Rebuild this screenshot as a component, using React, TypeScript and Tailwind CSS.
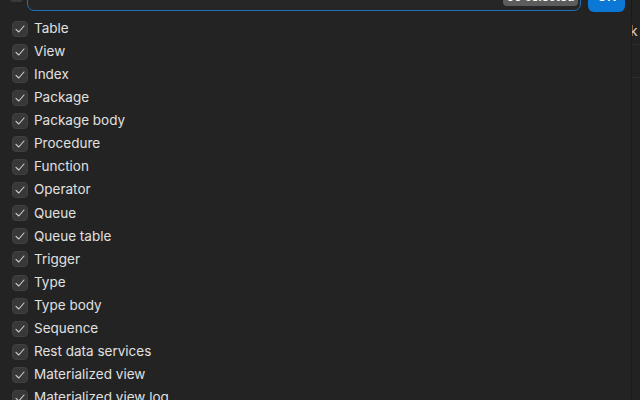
import React from "react";

// Tipos de objeto listados en el filtro
const items = [
  "Table",
  "View",
  "Index",
  "Package",
  "Package body",
  "Procedure",
  "Function",
  "Operator",
  "Queue",
  "Queue table",
  "Trigger",
  "Type",
  "Type body",
  "Sequence",
  "Rest data services",
  "Materialized view",
  "Materialized view log",
];

const Check: React.FC = () => (
  <span className="w-[16px] h-[16px] rounded-[4px] bg-[#383838] border border-[#404040] flex items-center justify-center shrink-0">
    <svg width="12" height="12" viewBox="0 0 12 12" fill="none">
      <path d="M2 6.3 L4.8 9 L10 3" stroke="#cfcfcf" strokeWidth="1.1" strokeLinecap="round" strokeLinejoin="round" />
    </svg>
  </span>
);

const App: React.FC = () => {
  return (
    <div
      className="w-[640px] h-[400px] overflow-hidden bg-[#232323] flex text-[#e3e3e3]"
      style={{ fontFamily: "Inter, 'Noto Sans', sans-serif" }}
    >
      {/* Panel principal */}
      <div className="w-[631px] shrink-0 flex flex-col">
        {/* Barra superior (cortada) */}
        <div className="flex items-end h-[28px] -mt-[18px] pl-[10px] shrink-0">
          <div className="w-[13px] h-[20px] rounded-[3px] bg-[#3a3a3a] mb-[8px]" />
          <div className="ml-[4px] w-[554px] h-[28px] rounded-[7px] border-[1.5px] border-[#1f6fb8] bg-[#262626] flex items-start justify-end pr-[2px] mb-[-1px]">
            <span className="h-[22px] w-[75px] rounded-[4px] bg-[#5c5c5c] text-white text-[12px] font-semibold leading-none flex items-end justify-center pb-[3px]">
              50 selected
            </span>
          </div>
          <div className="ml-[7px] w-[37px] h-[28px] rounded-[6px] bg-[#0a78d4] text-white text-[13px] font-semibold flex items-end justify-center pb-[9px] leading-none -mb-[2px]">
            OK
          </div>
        </div>

        {/* Lista de tipos */}
        <ul className="mt-[7px] pl-[12px] flex flex-col">
          {items.map((it) => (
            <li key={it} className="h-[23.1px] flex items-center gap-[6px] shrink-0">
              <Check />
              <span className="text-[13.5px] leading-none text-[#e0e0e0]">{it}</span>
            </li>
          ))}
        </ul>
      </div>

      {/* Panel lateral derecho */}
      <div className="flex-1 border-l border-[#1a1a1a] bg-[#222222] flex flex-col">
        <div className="h-[45px] border-b border-[#2e2e2e] flex items-center overflow-hidden">
          <span className="text-[14px] text-[#d0d0d0] -ml-[2px] mt-[16px]">k</span>
        </div>
        <div className="h-[33px] border-b border-[#2e2e2e]" />
      </div>
    </div>
  );
};

export default App;
